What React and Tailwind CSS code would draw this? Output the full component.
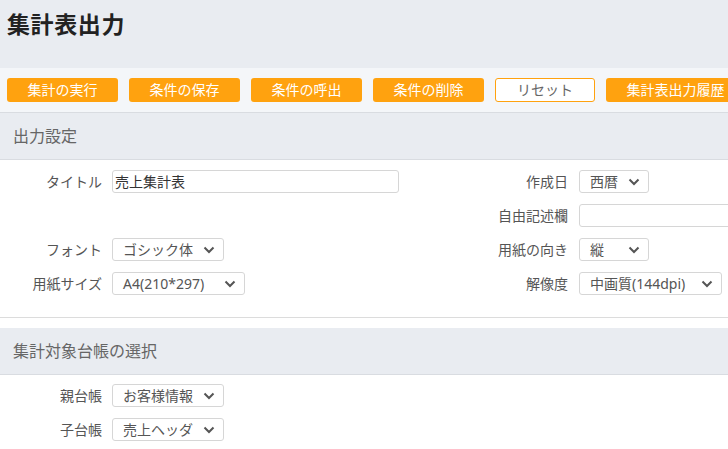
import React from 'react'

const buttons = [
  { label: '集計の実行' },
  { label: '条件の保存' },
  { label: '条件の呼出' },
  { label: '条件の削除' },
  { label: 'リセット', outline: true },
  { label: '集計表出力履歴' },
]

function Chevron() {
  return (
    <svg width="12" height="8" viewBox="0 0 12 8" className="shrink-0">
      <polyline points="1.5,1.5 6,6 10.5,1.5" fill="none" stroke="#555" strokeWidth="2" />
    </svg>
  )
}

function Select({ value, width }) {
  return (
    <div
      className="h-[23px] flex items-center justify-between pl-[10px] pr-[8px] border border-[#d6d6d6] rounded-[3px] bg-white text-[14px] text-[#555] whitespace-nowrap"
      style={{ width }}
    >
      <span>{value}</span>
      <Chevron />
    </div>
  )
}

function TextInput({ value, width }) {
  return (
    <div
      className="h-[23px] flex items-center px-[2px] border border-[#d6d6d6] rounded-[3px] bg-white text-[14px] text-[#333] whitespace-nowrap"
      style={{ width }}
    >
      {value}
    </div>
  )
}

function Field({ label, labelWidth = 102, gap = 10, children }) {
  return (
    <div className="flex items-center h-[23px]">
      <div className="text-right text-[14px] text-[#555] whitespace-nowrap shrink-0" style={{ width: labelWidth, marginRight: gap }}>
        {label}
      </div>
      {children}
    </div>
  )
}

function SectionHeader({ title }) {
  return (
    <div className="h-[47px] bg-[#e9ecf1] border-b border-[#d9dce1] flex items-center pl-[13px] text-[16px] text-[#666]">
      {title}
    </div>
  )
}

export default function App() {
  return (
    <div className="w-[728px] h-[449px] overflow-hidden bg-white leading-none" style={{ fontFamily: '"Noto Sans", "Noto Sans CJK JP", sans-serif' }}>
      {/* page title */}
      <div className="h-[68px] bg-[#e9ecf1] pl-[7px] pt-[13px]">
        <h1 className="text-[23px] font-bold text-[#222] tracking-[0.6px]">集計表出力</h1>
      </div>

      {/* toolbar */}
      <div className="h-[45px] bg-[#f4f6f9] border-b border-[#d9dce1] flex items-start gap-[11px] pl-[7px] pt-[10px] w-[900px]">
        {buttons.map((b) => (
          <button
            key={b.label}
            type="button"
            className={
              b.outline
                ? 'h-[24px] px-[21px] rounded-[3px] border border-[#ffa20f] bg-white text-[14px] text-[#666] whitespace-nowrap'
                : 'h-[24px] px-[20.5px] rounded-[3px] bg-[#ffa20f] text-[14px] text-white whitespace-nowrap'
            }
          >
            {b.label}
          </button>
        ))}
      </div>

      <SectionHeader title="出力設定" />

      <div className="grid grid-cols-[466px_1fr] gap-y-[11px] pt-[10px] pb-[22px] border-b border-[#dcdcdc]">
        <Field label="タイトル">
          <TextInput value="売上集計表" width={287} />
        </Field>
        <Field label="作成日" gap={11}>
          <Select value="西暦" width={70} />
        </Field>

        <div />
        <Field label="自由記述欄" gap={11}>
          <TextInput value="" width={200} />
        </Field>

        <Field label="フォント">
          <Select value="ゴシック体" width={112} />
        </Field>
        <Field label="用紙の向き" gap={11}>
          <Select value="縦" width={70} />
        </Field>

        <Field label="用紙サイズ">
          <Select value="A4(210*297)" width={133} />
        </Field>
        <Field label="解像度" gap={11}>
          <Select value="中画質(144dpi)" width={143} />
        </Field>
      </div>

      <div className="mt-[10px]">
        <SectionHeader title="集計対象台帳の選択" />
      </div>

      <div className="flex flex-col gap-[11px] pt-[9px]">
        <Field label="親台帳">
          <Select value="お客様情報" width={112} />
        </Field>
        <Field label="子台帳">
          <Select value="売上ヘッダ" width={112} />
        </Field>
      </div>
    </div>
  )
}
